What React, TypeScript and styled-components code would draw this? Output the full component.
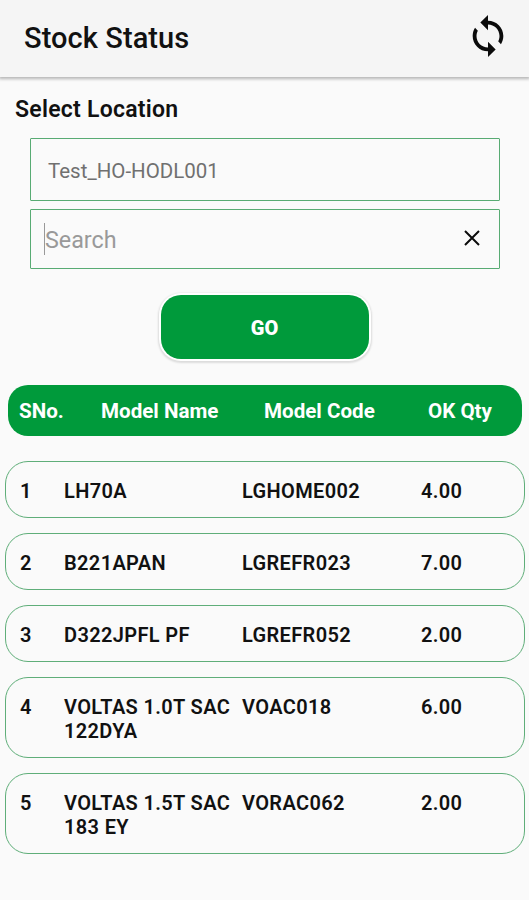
import React from "react";
import styled, { createGlobalStyle } from "styled-components";

const GREEN = "#009a3b";

const GlobalStyle = createGlobalStyle`
  * { box-sizing: border-box; }
  body {
    margin: 0;
    background: #fafafa;
    font-family: Roboto, "Liberation Sans", sans-serif;
    color: #111;
  }
`;

const Screen = styled.div`
  width: 529px;
  height: 900px;
  overflow: hidden;
  display: flex;
  flex-direction: column;
  background: #fafafa;
`;

const AppBar = styled.header`
  flex: none;
  height: 77px;
  padding: 0 18px 0 24px;
  display: flex;
  align-items: center;
  justify-content: space-between;
  background: #f5f5f5;
  box-shadow: 0 1px 3px 1px rgba(0, 0, 0, 0.28);
`;

const Title = styled.h1`
  margin: 0;
  padding-bottom: 2px;
  font-size: 29px;
  font-weight: 500;
  line-height: 36px;
  letter-spacing: 0.08px;
`;

const IconButton = styled.button<{ $lift?: number }>`
  display: flex;
  padding: 0 0 ${(p) => p.$lift ?? 0}px;
  border: 0;
  background: none;
  color: #0b0b0b;
`;

const Form = styled.section`
  display: flex;
  flex-direction: column;
  padding: 17px 29px 0 30px;
`;

const Label = styled.h2`
  margin: 0 0 14px -15px;
  padding-top: 1px;
  font-size: 23px;
  font-weight: 600;
  line-height: 29px;
  letter-spacing: 0.25px;
`;

const Field = styled.div<{ $height: number; $inset: number }>`
  height: ${(p) => p.$height}px;
  margin-bottom: 8px;
  padding: 0 17px 0 ${(p) => p.$inset}px;
  display: flex;
  align-items: center;
  border: 1px solid #58ab73;
  border-radius: 1px;
`;

const LocationValue = styled.span`
  font-size: 20.5px;
  padding-top: 2px;
  color: #707070;
`;

const Caret = styled.span`
  width: 1px;
  height: 32px;
  background: #999;
`;

const Placeholder = styled.span`
  flex: 1;
  font-size: 23.3px;
  padding-top: 1px;
  color: #999;
`;

const GoButton = styled.button`
  align-self: center;
  width: 208px;
  height: 64px;
  margin: 18px 1px 0 0;
  padding: 2px 0 0;
  border: 0;
  border-radius: 20px;
  background: ${GREEN};
  box-shadow: 0 0 0 2px #fff, 0 1px 2px 3px rgba(0, 0, 0, 0.12);
  color: #fff;
  font: 900 20px Roboto, "Liberation Sans", sans-serif;
`;

const TableHead = styled.div`
  flex: none;
  height: 51px;
  margin: 26px 7px 0 8px;
  padding: 1px 0 0 11px;
  display: grid;
  grid-template-columns: 82px 163px 164px 1fr;
  align-items: center;
  border-radius: 20px;
  background: ${GREEN};
  color: #fff;
  font-size: 20.6px;
  font-weight: 700;
  white-space: nowrap;
`;

const Rows = styled.div`
  display: flex;
  flex-direction: column;
  gap: 15px;
  margin-top: 25px;
  padding: 0 4px 0 5px;
`;

const Row = styled.div<{ $tall: boolean }>`
  height: ${(p) => (p.$tall ? 81 : 57)}px;
  padding: 17px 0 0 14px;
  display: grid;
  grid-template-columns: 44px 178px 179px 1fr;
  align-items: start;
  border: 1px solid #5fae79;
  border-radius: 23px;
  font-size: 20px;
  font-weight: 600;
  line-height: 24px;
  letter-spacing: 0.36px;
  white-space: pre;
`;

const items = [
  { name: "LH70A", code: "LGHOME002", qty: "4.00" },
  { name: "B221APAN", code: "LGREFR023", qty: "7.00" },
  { name: "D322JPFL PF", code: "LGREFR052", qty: "2.00" },
  { name: "VOLTAS 1.0T SAC\n122DYA", code: "VOAC018", qty: "6.00" },
  { name: "VOLTAS 1.5T SAC\n183 EY", code: "VORAC062", qty: "2.00" },
];

const SyncIcon = () => (
  <svg width="46" height="46" viewBox="0 0 24 24" fill="currentColor">
    <path d="M12 4V1L8 5l4 4V6c3.31 0 6 2.69 6 6 0 1.01-.25 1.97-.7 2.8l1.46 1.46C19.54 15.03 20 13.57 20 12c0-4.42-3.58-8-8-8zm0 14c-3.31 0-6-2.69-6-6 0-1.01.25-1.97.7-2.8L5.24 7.74C4.46 8.97 4 10.43 4 12c0 4.42 3.58 8 8 8v3l4-4-4-4v3z" />
  </svg>
);

const ClearIcon = () => (
  <svg width="20" height="20" viewBox="0 0 20 20" stroke="currentColor" strokeWidth="2">
    <path d="M3 2l14 14M17 2L3 16" />
  </svg>
);

export default function App() {
  return (
    <Screen>
      <GlobalStyle />
      <AppBar>
        <Title>Stock Status</Title>
        <IconButton aria-label="Refresh" $lift={6}>
          <SyncIcon />
        </IconButton>
      </AppBar>
      <Form>
        <Label>Select Location</Label>
        <Field $height={63} $inset={17}>
          <LocationValue>Test_HO-HODL001</LocationValue>
        </Field>
        <Field $height={60} $inset={13}>
          <Caret />
          <Placeholder>Search</Placeholder>
          <IconButton aria-label="Clear">
            <ClearIcon />
          </IconButton>
        </Field>
        <GoButton>GO</GoButton>
      </Form>
      <TableHead>
        <span>SNo.</span>
        <span>Model Name</span>
        <span>Model Code</span>
        <span>OK Qty</span>
      </TableHead>
      <Rows>
        {items.map((item, i) => (
          <Row key={item.code} $tall={item.name.includes("\n")}>
            <span>{i + 1}</span>
            <span>{item.name}</span>
            <span>{item.code}</span>
            <span>{item.qty}</span>
          </Row>
        ))}
      </Rows>
    </Screen>
  );
}
